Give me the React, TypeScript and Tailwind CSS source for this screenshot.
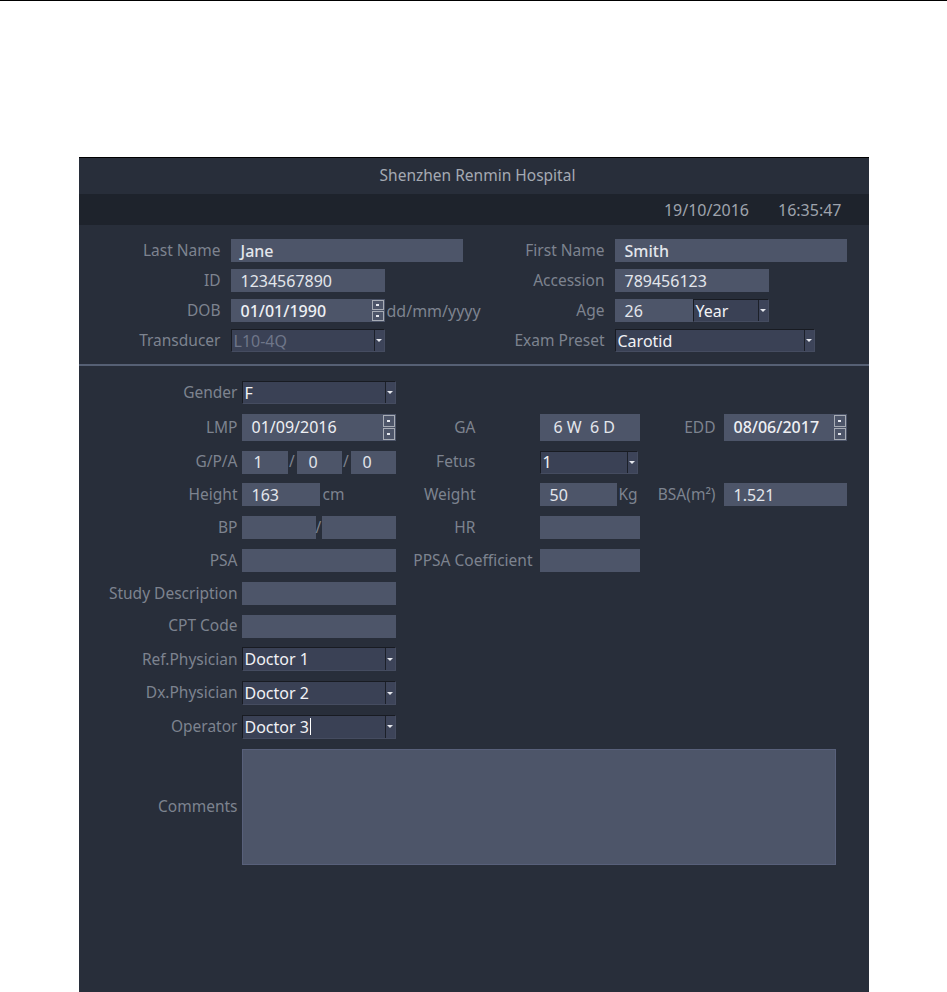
import React from 'react';

type BoxProps = {
    value?: string;
    className: string;
};

const labelCls = 'text-[15.5px] leading-none text-[#7d838f] whitespace-nowrap';

function TextBox({ value, className }: BoxProps) {
    return (
        <div
            className={`flex shrink-0 items-center bg-[#4d5569] text-[16px] leading-none text-[#e3e6ec] ${className}`}
        >
            {value}
        </div>
    );
}

function Arrow() {
    return (
        <span className="flex w-[10px] items-center justify-center self-stretch border-l border-[#1c2029] bg-[#3d4459]">
            <span className="h-0 w-0 border-x-[3px] border-t-[3px] border-x-transparent border-t-[#e6e8ee]" />
        </span>
    );
}

function Dropdown({
    value,
    className,
    disabled,
    cursor,
}: BoxProps & { disabled?: boolean; cursor?: boolean }) {
    return (
        <div
            className={`flex shrink-0 items-stretch border-t border-l border-[#181b22] border-r border-b border-r-[#454c60] border-b-[#454c60] bg-[#3a4155] ${className}`}
        >
            <span
                className={`flex flex-1 items-center pl-[2px] text-[16px] leading-none ${
                    disabled ? 'text-[#6f7689]' : 'text-[#f1f2f5]'
                }`}
            >
                {value}
                {cursor && <span className="ml-[1px] h-[17px] w-[1px] bg-white" />}
            </span>
            <Arrow />
        </div>
    );
}

function Spinner() {
    return (
        <div className="flex w-[12px] flex-col gap-[1px] self-stretch py-[1px]">
            <div className="flex flex-1 items-center justify-center border border-[#a7acb5]">
                <span className="h-[2px] w-[3px] bg-[#e6e8ee]" />
            </div>
            <div className="flex flex-1 items-center justify-center border border-[#a7acb5]">
                <span className="h-[2px] w-[3px] bg-[#e6e8ee]" />
            </div>
        </div>
    );
}

function DateBox({ value, className }: BoxProps) {
    return (
        <div className={`flex shrink-0 items-center bg-[#4d5569] pr-[1px] ${className}`}>
            <span className="flex-1 pl-[10px] text-[16px] leading-none text-[#eef0f4]">
                {value}
            </span>
            <Spinner />
        </div>
    );
}

function TopLabel({ text }: { text: string }) {
    return <div className={`flex h-[23px] items-center justify-end pr-[10px] ${labelCls}`}>{text}</div>;
}

function L1({ text }: { text: string }) {
    return <div className={`flex items-center justify-end pr-[4px] ${labelCls}`}>{text}</div>;
}

function L2({ text, wide }: { text: string; wide?: boolean }) {
    return (
        <div
            className={`flex items-center justify-end ${wide ? 'pr-[7px]' : 'pr-[64px]'} ${labelCls}`}
        >
            {text}
        </div>
    );
}

function L3({ text }: { text?: string }) {
    return <div className={`flex items-center justify-end pr-[8px] ${labelCls}`}>{text}</div>;
}

export default function App() {
    return (
        <div className="min-h-[992px] border-t border-black bg-white font-['Noto_Sans',sans-serif]">
            <div className="mx-auto mt-[156px] h-[835px] w-[790px] border-t border-black bg-[#282e3a]">
                {/* title */}
                <div className="flex h-[36px] items-center justify-center pl-[8px] text-[15.5px] text-[#a4a9b2]">
                    Shenzhen Renmin Hospital
                </div>
                <div className="flex h-[31px] items-center justify-end gap-[29px] bg-[#1e232c] pr-[27px] text-[16px] text-[#9ea3ac]">
                    <span>19/10/2016</span>
                    <span>16:35:47</span>
                </div>

                {/* patient info */}
                <div className="grid grid-cols-[152px_232px_152px_232px] gap-y-[7px] pt-[14px]">
                    <TopLabel text="Last Name" />
                    <TextBox value="Jane" className="h-[23px] w-[232px] pl-[10px] font-medium" />
                    <TopLabel text="First Name" />
                    <TextBox value="Smith" className="h-[23px] w-[232px] pl-[10px] font-medium" />

                    <TopLabel text="ID" />
                    <TextBox value="1234567890" className="h-[23px] w-[154px] pl-[10px]" />
                    <TopLabel text="Accession" />
                    <TextBox value="789456123" className="h-[23px] w-[154px] pl-[10px]" />

                    <TopLabel text="DOB" />
                    <div className="flex h-[23px] items-center">
                        <DateBox value="01/01/1990" className="h-[23px] w-[154px] font-medium" />
                        <span className="ml-[2px] whitespace-nowrap text-[16px] leading-none text-[#7d838f]">
                            dd/mm/yyyy
                        </span>
                    </div>
                    <TopLabel text="Age" />
                    <div className="flex h-[23px]">
                        <TextBox value="26" className="h-[23px] w-[78px] pl-[10px]" />
                        <Dropdown value="Year" className="h-[23px] w-[76px]" />
                    </div>

                    <TopLabel text="Transducer" />
                    <Dropdown value="L10-4Q" disabled className="h-[23px] w-[154px]" />
                    <TopLabel text="Exam Preset" />
                    <Dropdown value="Carotid" className="h-[23px] w-[200px]" />
                </div>

                <div className="mt-[12px] h-[2px] bg-[#566074]" />

                {/* exam info */}
                <div className="grid grid-cols-[163px_154px_144px_100px_84px_123px] gap-y-[9.8px] pt-[15px]">
                    <L1 text="Gender" />
                    <Dropdown value="F" className="h-[23px] w-[154px]" />
                    <div />
                    <div />
                    <div />
                    <div />

                    <L1 text="LMP" />
                    <DateBox value="01/09/2016" className="h-[27px] w-[154px]" />
                    <L2 text="GA" />
                    <TextBox value="6 W  6 D" className="h-[27px] w-[100px] whitespace-pre pl-[14px]" />
                    <L3 text="EDD" />
                    <DateBox value="08/06/2017" className="h-[27px] w-[123px] font-medium" />

                    <L1 text="G/P/A" />
                    <div className="flex h-[23px] items-center">
                        <TextBox value="1" className="h-[23px] w-[46px] pl-[12px]" />
                        <span className={`w-[9px] text-center ${labelCls}`}>/</span>
                        <TextBox value="0" className="h-[23px] w-[45px] pl-[12px]" />
                        <span className={`w-[9px] text-center ${labelCls}`}>/</span>
                        <TextBox value="0" className="h-[23px] w-[45px] pl-[12px]" />
                    </div>
                    <L2 text="Fetus" />
                    <Dropdown value="1" className="h-[23px] w-[98px]" />
                    <div />
                    <div />

                    <L1 text="Height" />
                    <div className="flex h-[23px] items-center">
                        <TextBox value="163" className="h-[23px] w-[78px] pl-[10px]" />
                        <span className={`ml-[3px] ${labelCls}`}>cm</span>
                    </div>
                    <L2 text="Weight" />
                    <div className="flex h-[23px] items-center">
                        <TextBox value="50" className="h-[23px] w-[77px] pl-[10px]" />
                        <span className={`ml-[2px] ${labelCls}`}>Kg</span>
                    </div>
                    <L3 text="BSA(m²)" />
                    <TextBox value="1.521" className="h-[23px] w-[123px] pl-[10px]" />

                    <L1 text="BP" />
                    <div className="flex h-[23px] items-center">
                        <TextBox className="h-[23px] w-[74px]" />
                        <span className={`w-[6px] text-center ${labelCls}`}>/</span>
                        <TextBox className="h-[23px] w-[74px]" />
                    </div>
                    <L2 text="HR" />
                    <TextBox className="h-[23px] w-[100px]" />
                    <div />
                    <div />

                    <L1 text="PSA" />
                    <TextBox className="h-[23px] w-[154px]" />
                    <L2 text="PPSA Coefficient" wide />
                    <TextBox className="h-[23px] w-[100px]" />
                    <div />
                    <div />

                    <L1 text="Study Description" />
                    <TextBox className="h-[23px] w-[154px]" />
                    <div />
                    <div />
                    <div />
                    <div />

                    <L1 text="CPT Code" />
                    <TextBox className="h-[23px] w-[154px]" />
                    <div />
                    <div />
                    <div />
                    <div />

                    <L1 text="Ref.Physician" />
                    <Dropdown value="Doctor 1" className="h-[24px] w-[154px]" />
                    <div />
                    <div />
                    <div />
                    <div />

                    <L1 text="Dx.Physician" />
                    <Dropdown value="Doctor 2" className="h-[24px] w-[154px]" />
                    <div />
                    <div />
                    <div />
                    <div />

                    <L1 text="Operator" />
                    <Dropdown value="Doctor 3" cursor className="h-[24px] w-[154px]" />
                    <div />
                    <div />
                    <div />
                    <div />

                    <L1 text="Comments" />
                    <div className="col-span-5">
                        <div className="h-[116px] w-[594px] border border-[#58607a] bg-[#4d5569]" />
                    </div>
                </div>
            </div>
        </div>
    );
}
